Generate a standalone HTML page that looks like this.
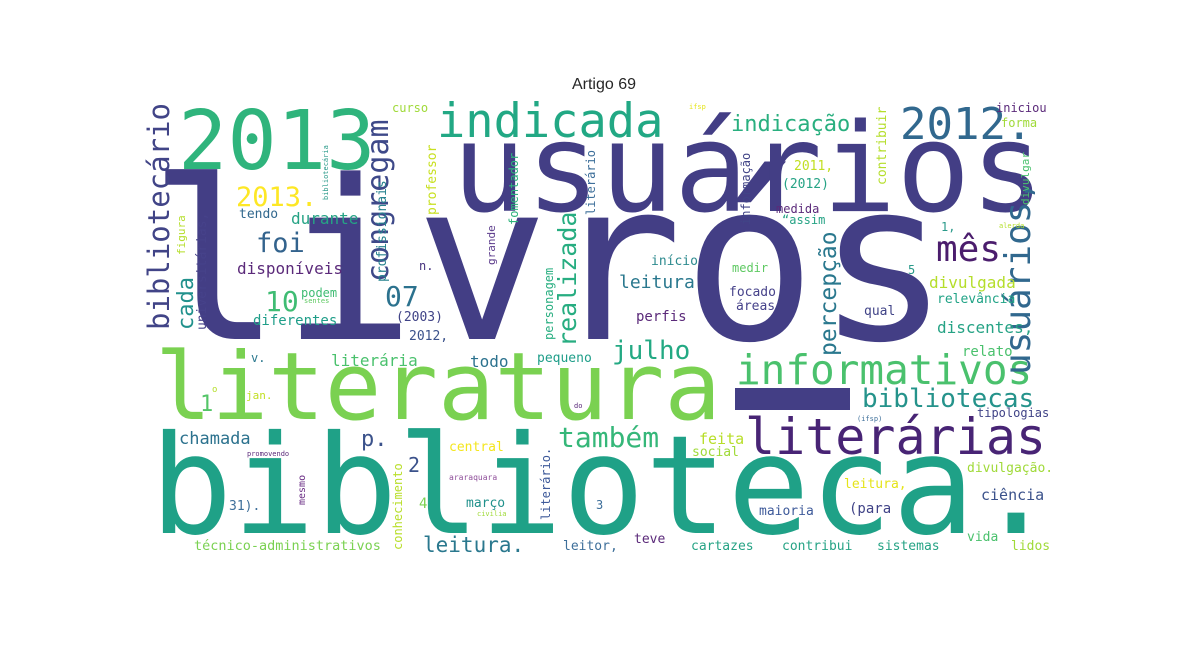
<!DOCTYPE html>
<html><head><meta charset="utf-8"><style>
html,body{margin:0;padding:0;background:#fff;}
#c{position:relative;width:1180px;height:650px;overflow:hidden;background:#fff;}
.w{position:absolute;font-family:"DejaVu Sans Mono","Liberation Mono",monospace;line-height:1;white-space:nowrap;}
.v{transform:rotate(-90deg);transform-origin:0 0;}
.t{position:absolute;left:0;width:1208px;text-align:center;top:76px;font-family:"Liberation Sans",sans-serif;font-size:16px;color:#262626;}
</style></head><body><div id="c">
<div class="t">Artigo 69</div>

<span class="w" style="left:148px;top:152px;font-size:222px;color:#433e85">livrós</span>
<span class="w" style="left:452px;top:108px;font-size:123px;color:#433e85">usuários</span>
<div style="position:absolute;left:735px;top:388px;width:115px;height:22px;background:#433e85"></div>
<span class="w" style="left:178px;top:101px;font-size:82px;color:#2fb47c">2013</span>
<span class="w" style="left:437px;top:98px;font-size:47px;color:#22a884">indicada</span>
<span class="w" style="left:900px;top:103px;font-size:44px;color:#31688e">2012.</span>
<span class="w" style="left:155px;top:341px;font-size:94px;color:#7ad151">literatura</span>
<span class="w" style="left:150px;top:418px;font-size:137px;color:#1fa187">biblioteca.</span>
<span class="w" style="left:745px;top:412px;font-size:50px;color:#482475">literárias</span>
<span class="w" style="left:736px;top:350px;font-size:41px;color:#4ac16d">informativos</span>
<span class="w" style="left:862px;top:386px;font-size:26px;color:#25938b">bibliotecas</span>
<span class="w" style="left:936px;top:232px;font-size:36px;color:#4b1d6d">mês</span>
<span class="w" style="left:612px;top:338px;font-size:26px;color:#23a983">julho</span>
<span class="w" style="left:558px;top:424px;font-size:28px;color:#35b779">também</span>
<span class="w" style="left:236px;top:184px;font-size:27px;color:#fde725">2013.</span>
<span class="w" style="left:256px;top:230px;font-size:27px;color:#33638d">foi</span>
<span class="w" style="left:265px;top:288px;font-size:28px;color:#3fbc73">10</span>
<span class="w" style="left:385px;top:283px;font-size:28px;color:#2c728e">07</span>
<span class="w" style="left:731px;top:114px;font-size:22px;color:#29af7f">indicação</span>
<span class="w" style="left:179px;top:431px;font-size:17px;color:#2c728e">chamada</span>
<span class="w" style="left:361px;top:429px;font-size:22px;color:#3b528b">p.</span>
<span class="w" style="left:423px;top:535px;font-size:21px;color:#2a788e">leitura.</span>
<span class="w" style="left:619px;top:274px;font-size:18px;color:#2a788e">leitura</span>

<span class="w v" style="left:145px;top:330px;font-size:29px;color:#414487">bibliotecário</span>
<span class="w v" style="left:1001px;top:375px;font-size:36px;color:#31688e">usuários,</span>
<span class="w v" style="left:364px;top:282px;font-size:30px;color:#3e4989">congregam</span>
<span class="w v" style="left:555px;top:347px;font-size:25px;color:#27ad81">realizada</span>
<span class="w v" style="left:818px;top:356px;font-size:23px;color:#2a788e">percepção</span>
<span class="w v" style="left:176px;top:330px;font-size:22px;color:#21918c">cada</span>

<span class="w" style="left:392px;top:102px;font-size:12px;color:#a0da39">curso</span>
<span class="w v" style="left:376px;top:282px;font-size:13px;color:#26828e">profissionais</span>
<span class="w v" style="left:426px;top:215px;font-size:13px;color:#c8e020">professor</span>
<span class="w v" style="left:508px;top:225px;font-size:12px;color:#2eb37c">fomentador</span>
<span class="w v" style="left:585px;top:215px;font-size:12px;color:#3e6f9a">literário</span>
<span class="w v" style="left:486px;top:265px;font-size:11px;color:#5c3c8c">grande</span>
<span class="w v" style="left:543px;top:340px;font-size:12px;color:#28ae80">personagem</span>
<span class="w v" style="left:323px;top:200px;font-size:7px;color:#2a9a8a">bibliotecária</span>
<span class="w" style="left:239px;top:208px;font-size:13px;color:#31688e">tendo</span>
<span class="w" style="left:291px;top:211px;font-size:16px;color:#26a385">durante</span>
<span class="w" style="left:237px;top:261px;font-size:16px;color:#5b2a7a">disponíveis</span>
<span class="w" style="left:419px;top:260px;font-size:12px;color:#46327e">n.</span>
<span class="w v" style="left:176px;top:255px;font-size:11px;color:#b5de2b">figura</span>
<span class="w v" style="left:196px;top:330px;font-size:13px;color:#46428a">universitárias,</span>
<span class="w" style="left:301px;top:287px;font-size:12px;color:#3fbc73">podem</span>
<span class="w" style="left:304px;top:298px;font-size:7px;color:#5ec962">sentes</span>
<span class="w" style="left:253px;top:314px;font-size:14px;color:#1f9e89">diferentes</span>
<span class="w" style="left:396px;top:311px;font-size:13px;color:#404387">(2003)</span>
<span class="w" style="left:409px;top:330px;font-size:13px;color:#3b528b">2012,</span>
<span class="w" style="left:251px;top:352px;font-size:12px;color:#2a788e">v.</span>
<span class="w" style="left:331px;top:353px;font-size:16px;color:#4ac16d">literária</span>
<span class="w" style="left:470px;top:354px;font-size:16px;color:#2c728e">todo</span>
<span class="w" style="left:537px;top:352px;font-size:13px;color:#1f9e89">pequeno</span>
<span class="w" style="left:200px;top:394px;font-size:22px;color:#54c568">1</span>
<span class="w" style="left:212px;top:386px;font-size:9px;color:#b5de2b">o</span>
<span class="w" style="left:246px;top:390px;font-size:11px;color:#c2df23">jan.</span>
<span class="w" style="left:449px;top:441px;font-size:13px;color:#f4e61e">central</span>
<span class="w" style="left:247px;top:451px;font-size:7px;color:#5b2a7a">promovendo</span>
<span class="w" style="left:408px;top:455px;font-size:20px;color:#3b528b">2</span>
<span class="w v" style="left:298px;top:505px;font-size:10px;color:#6a2c84">mesmo</span>
<span class="w v" style="left:392px;top:550px;font-size:12px;color:#b8de29">conhecimento</span>
<span class="w" style="left:449px;top:474px;font-size:8px;color:#8f4f9a">araraquara</span>
<span class="w v" style="left:540px;top:520px;font-size:12px;color:#3e5a9a">literário.</span>
<span class="w" style="left:229px;top:500px;font-size:13px;color:#3e6f9a">31).</span>
<span class="w" style="left:419px;top:497px;font-size:14px;color:#7ad151">4</span>
<span class="w" style="left:466px;top:497px;font-size:13px;color:#21918c">março</span>
<span class="w" style="left:477px;top:511px;font-size:7px;color:#a0da39">civilia</span>
<span class="w" style="left:194px;top:540px;font-size:13.5px;color:#7ad151">técnico-administrativos</span>
<span class="w" style="left:563px;top:540px;font-size:13px;color:#3e6f9a">leitor,</span>
<span class="w" style="left:634px;top:533px;font-size:13px;color:#5b2a7a">teve</span>
<span class="w" style="left:691px;top:540px;font-size:13px;color:#26a385">cartazes</span>
<span class="w" style="left:782px;top:540px;font-size:13px;color:#26a385">contribui</span>
<span class="w" style="left:877px;top:540px;font-size:13px;color:#26a385">sistemas</span>
<span class="w" style="left:967px;top:531px;font-size:13px;color:#4ac16d">vida</span>
<span class="w" style="left:1011px;top:540px;font-size:13px;color:#a0da39">lidos</span>
<span class="w" style="left:759px;top:505px;font-size:13px;color:#3e5a9a">maioria</span>
<span class="w" style="left:849px;top:502px;font-size:14px;color:#404387">(para</span>
<span class="w" style="left:981px;top:488px;font-size:15px;color:#3b528b">ciência</span>
<span class="w" style="left:844px;top:478px;font-size:13px;color:#e5e419">leitura,</span>
<span class="w" style="left:967px;top:462px;font-size:13px;color:#a0da39">divulgação.</span>
<span class="w" style="left:596px;top:499px;font-size:12px;color:#3e6f9a">3</span>
<span class="w" style="left:699px;top:432px;font-size:15px;color:#b8de29">feita</span>
<span class="w" style="left:692px;top:446px;font-size:13px;color:#a0da39">social</span>
<span class="w" style="left:962px;top:345px;font-size:14px;color:#4ac16d">relato</span>
<span class="w" style="left:977px;top:407px;font-size:12px;color:#404387">tipologias</span>
<span class="w" style="left:937px;top:320px;font-size:16px;color:#26a385">discentes,</span>
<span class="w" style="left:937px;top:293px;font-size:13px;color:#20a386">relevância</span>
<span class="w" style="left:929px;top:275px;font-size:16px;color:#b5de2b">divulgada</span>
<span class="w" style="left:864px;top:305px;font-size:13px;color:#404387">qual</span>
<span class="w" style="left:908px;top:264px;font-size:12px;color:#2a9a8a">5</span>
<span class="w" style="left:941px;top:221px;font-size:12px;color:#2a9a8a">1,</span>
<span class="w" style="left:651px;top:255px;font-size:13px;color:#2c8a8e">início</span>
<span class="w" style="left:732px;top:262px;font-size:12px;color:#5ec962">medir</span>
<span class="w" style="left:729px;top:286px;font-size:13px;color:#46428a">focado</span>
<span class="w" style="left:736px;top:300px;font-size:13px;color:#46428a">áreas</span>
<span class="w" style="left:636px;top:310px;font-size:14px;color:#5b2a7a">perfis</span>
<span class="w v" style="left:740px;top:225px;font-size:12px;color:#414487">informação</span>
<span class="w v" style="left:876px;top:185px;font-size:13px;color:#b5de2b">contribuir</span>
<span class="w" style="left:794px;top:160px;font-size:13px;color:#c2df23">2011,</span>
<span class="w" style="left:782px;top:178px;font-size:13px;color:#26a385">(2012)</span>
<span class="w" style="left:776px;top:203px;font-size:12px;color:#5b2a7a">medida</span>
<span class="w" style="left:782px;top:214px;font-size:12px;color:#26a385">“assim</span>
<span class="w" style="left:996px;top:102px;font-size:12px;color:#5b2a7a">iniciou</span>
<span class="w" style="left:1001px;top:117px;font-size:12px;color:#a0da39">forma</span>
<span class="w v" style="left:1020px;top:205px;font-size:11px;color:#4ac16d">divulgar</span>
<span class="w" style="left:689px;top:104px;font-size:7px;color:#e5e419">ifsp</span>
<span class="w" style="left:999px;top:223px;font-size:7px;color:#b5de2b">alerda</span>
<span class="w" style="left:857px;top:416px;font-size:7px;color:#3e6f9a">(ifsp)</span>
<span class="w" style="left:574px;top:403px;font-size:7px;color:#5b2a7a">do</span>
</div></body></html>
